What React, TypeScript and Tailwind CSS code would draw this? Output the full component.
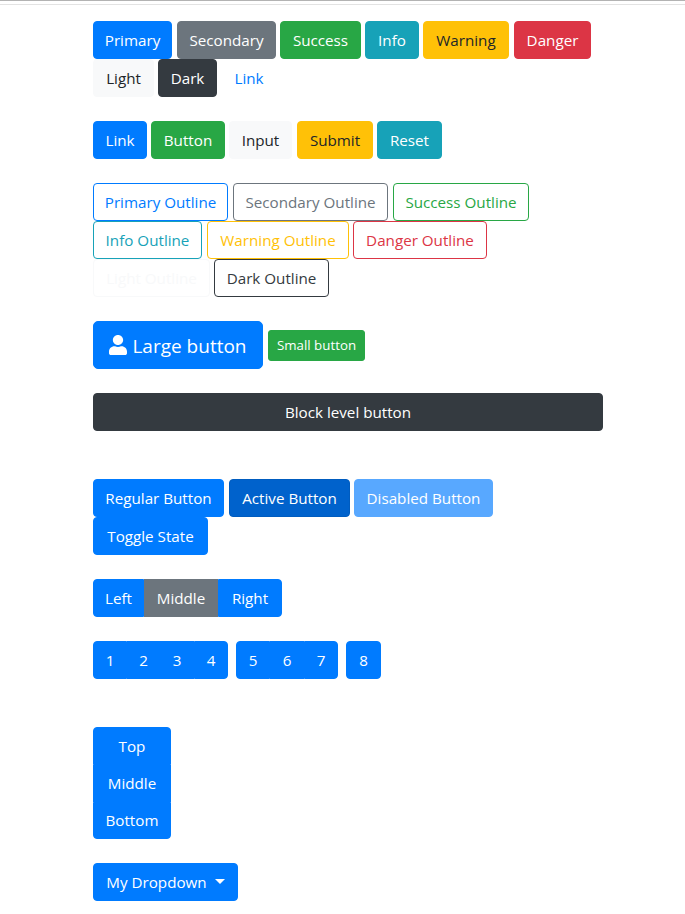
import type { ReactNode } from 'react';
import { FaUser } from 'react-icons/fa';

const tones = {
  primary: 'bg-[#007bff] border-[#007bff] text-white',
  secondary: 'bg-[#6c757d] border-[#6c757d] text-white',
  success: 'bg-[#28a745] border-[#28a745] text-white',
  info: 'bg-[#17a2b8] border-[#17a2b8] text-white',
  warning: 'bg-[#ffc107] border-[#ffc107] text-[#212529]',
  danger: 'bg-[#dc3545] border-[#dc3545] text-white',
  light: 'bg-[#f8f9fa] border-[#f8f9fa] text-[#212529]',
  dark: 'bg-[#343a40] border-[#343a40] text-white',
  link: 'bg-transparent border-transparent text-[#007bff]',
  active: 'bg-[#0062cc] border-[#005cbf] text-white',
  disabled: 'bg-[#007bff] border-[#007bff] text-white opacity-65',
  oPrimary: 'border-[#007bff] text-[#007bff]',
  oSecondary: 'border-[#6c757d] text-[#6c757d]',
  oSuccess: 'border-[#28a745] text-[#28a745]',
  oInfo: 'border-[#17a2b8] text-[#17a2b8]',
  oWarning: 'border-[#ffc107] text-[#ffc107]',
  oDanger: 'border-[#dc3545] text-[#dc3545]',
  oLight: 'border-[#f8f9fa] text-[#f8f9fa]',
  oDark: 'border-[#343a40] text-[#343a40]',
};

type BtnProps = { tone: keyof typeof tones; className?: string; size?: string; round?: string; children: ReactNode };

function Btn({ tone, className = '', size = 'h-[38px] text-[15.2px]', round = 'rounded-[4px]', children }: BtnProps) {
  return (
    <button
      type="button"
      disabled={tone === 'disabled'}
      className={`flex shrink-0 items-center justify-center whitespace-nowrap border ${tones[tone]} ${size} ${round} ${className}`}
    >
      {children}
    </button>
  );
}

function Row({ className = '', children }: { className?: string; children: ReactNode }) {
  return <div className={`flex ${className}`}>{children}</div>;
}

export default function App() {
  return (
    <div className="h-[914px] w-full overflow-hidden bg-white font-['Open_Sans','Noto_Sans',sans-serif]">
      <div className="h-[5px] border-t border-b border-t-[#b3b3b3] border-b-[#e3e3e3]" />
      <main className="ml-[93px] w-[510px] pt-4">
        <Row>
          <Btn tone="primary" className="w-[79px]">Primary</Btn>
          <Btn tone="secondary" className="ml-[5px] w-[99px]">Secondary</Btn>
          <Btn tone="success" className="ml-1 w-[81px]">Success</Btn>
          <Btn tone="info" className="ml-1 w-[54px]">Info</Btn>
          <Btn tone="warning" className="ml-1 w-[86px]">Warning</Btn>
          <Btn tone="danger" className="ml-[5px] w-[77px]">Danger</Btn>
        </Row>
        <Row>
          <Btn tone="light" className="w-[61px]">Light</Btn>
          <Btn tone="dark" className="ml-1 w-[59px]">Dark</Btn>
          <Btn tone="link" className="ml-[5px] w-[54px]">Link</Btn>
        </Row>

        <Row className="mt-6">
          <Btn tone="primary" className="w-[54px]">Link</Btn>
          <Btn tone="success" className="ml-1 w-[74px]">Button</Btn>
          <Btn tone="light" className="ml-1 w-[63px]">Input</Btn>
          <Btn tone="warning" className="ml-[5px] w-[76px]">Submit</Btn>
          <Btn tone="info" className="ml-1 w-[65px]">Reset</Btn>
        </Row>

        <Row className="mt-6">
          <Btn tone="oPrimary" className="w-[135px]">Primary Outline</Btn>
          <Btn tone="oSecondary" className="ml-[5px] w-[155px]">Secondary Outline</Btn>
          <Btn tone="oSuccess" className="ml-[5px] w-[136px]">Success Outline</Btn>
        </Row>
        <Row>
          <Btn tone="oInfo" className="w-[109px]">Info Outline</Btn>
          <Btn tone="oWarning" className="ml-[5px] w-[142px]">Warning Outline</Btn>
          <Btn tone="oDanger" className="ml-1 w-[134px]">Danger Outline</Btn>
        </Row>
        <Row>
          <Btn tone="oLight" className="w-[117px]">Light Outline</Btn>
          <Btn tone="oDark" className="ml-1 w-[115px]">Dark Outline</Btn>
        </Row>

        <Row className="mt-6 items-center">
          <Btn tone="primary" size="h-12 text-[19px]" round="rounded-[5px]" className="w-[170px]">
            <FaUser className="mr-[5px] h-5 w-[18px] shrink-0" preserveAspectRatio="none" />
            <span className="pt-0.5">Large button</span>
          </Btn>
          <Btn tone="success" size="h-[31px] text-[13.3px]" round="rounded-[3px]" className="ml-[5px] w-[97px] pt-0.5">Small button</Btn>
        </Row>

        <Btn tone="dark" className="mt-6 w-full">Block level button</Btn>

        <Row className="mt-12">
          <Btn tone="primary" className="w-[131px]">Regular Button</Btn>
          <Btn tone="active" className="ml-[5px] w-[121px]">Active Button</Btn>
          <Btn tone="disabled" className="ml-1 w-[139px]">Disabled Button</Btn>
        </Row>
        <Row>
          <Btn tone="primary" className="w-[115px]">Toggle State</Btn>
        </Row>

        <Row className="mt-6">
          <Btn tone="primary" round="rounded-l-[4px]" className="w-[51px]">Left</Btn>
          <Btn tone="secondary" round="rounded-none" className="w-[74px]">Middle</Btn>
          <Btn tone="primary" round="rounded-r-[4px]" className="w-16">Right</Btn>
        </Row>

        <Row className="mt-6 gap-2">
          <Row>
            <Btn tone="primary" round="rounded-l-[4px]" className="w-[34px]">1</Btn>
            <Btn tone="primary" round="rounded-none" className="w-[33px]">2</Btn>
            <Btn tone="primary" round="rounded-none" className="w-[34px]">3</Btn>
            <Btn tone="primary" round="rounded-r-[4px]" className="w-[34px]">4</Btn>
          </Row>
          <Row>
            <Btn tone="primary" round="rounded-l-[4px]" className="w-[34px]">5</Btn>
            <Btn tone="primary" round="rounded-none" className="w-[34px]">6</Btn>
            <Btn tone="primary" round="rounded-r-[4px]" className="w-[34px]">7</Btn>
          </Row>
          <Btn tone="primary" className="w-[35px]">8</Btn>
        </Row>

        <div className="mt-12 flex w-[78px] flex-col">
          <Btn tone="primary" round="rounded-t-[4px]">Top</Btn>
          <Btn tone="primary" size="h-[37px] text-[15.2px]" round="rounded-none">Middle</Btn>
          <Btn tone="primary" size="h-[37px] text-[15.2px]" round="rounded-b-[4px]">Bottom</Btn>
        </div>

        <Btn tone="primary" className="mt-6 w-[145px]">
          My Dropdown
          <span className="-mt-0.5 ml-2 border-x-[5px] border-t-[5px] border-x-transparent border-t-white" />
        </Btn>
      </main>
    </div>
  );
}
